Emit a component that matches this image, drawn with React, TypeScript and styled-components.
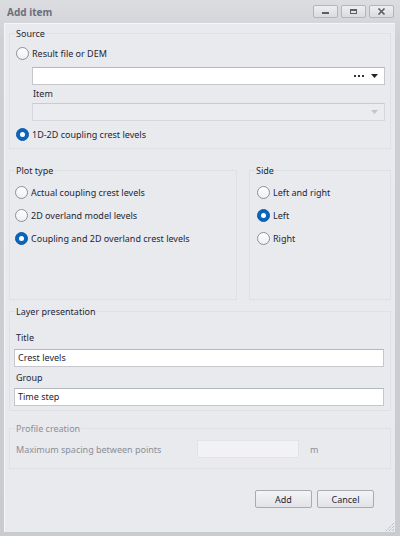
import styled, { createGlobalStyle } from "styled-components"

const GlobalStyle = createGlobalStyle`
  html, body {
    margin: 0;
    padding: 0;
    background: #c6c8cd;
  }
  body {
    font-family: "Noto Sans", "Liberation Sans", sans-serif;
    font-size: 9px;
    color: #1d2636;
  }
`

const Window = styled.div`
  width: 400px;
  height: 536px;
  box-sizing: border-box;
  display: flex;
  flex-direction: column;
  padding: 0 5px 4px 4px;
  background: linear-gradient(#dcdde1, #cfd0d5 40px, #c9cbd0);
`

const TitleBar = styled.div`
  height: 23px;
  flex: none;
  display: flex;
  align-items: center;
  margin-left: -4px;
  margin-right: -5px;
  padding: 0 6px 0 7px;
`

const Title = styled.div`
  flex: 1;
  font-size: 10px;
  font-weight: bold;
  color: #6c6f7b;
`

const CaptionButtons = styled.div`
  display: flex;
  gap: 3px;
`

const CaptionButton = styled.div`
  width: 25px;
  height: 13px;
  box-sizing: border-box;
  border: 1px solid #b3b5bc;
  border-radius: 2px;
  background: linear-gradient(#eeeff1, #dadbdf);
  display: flex;
  align-items: center;
  justify-content: center;
`

const Body = styled.div`
  flex: 1;
  position: relative;
  display: flex;
  flex-direction: column;
  padding: 3px 4px 0 5px;
  background: #e9eaee;
  box-shadow: inset 1px 1px 0 #f5f5f7;
`

const Group = styled.fieldset<{ $height?: number }>`
  margin: 0;
  padding: 0;
  min-width: 0;
  border: 1px solid #dfe0e4;
  ${(p) => (p.$height ? `height: ${p.$height}px; box-sizing: border-box;` : "")}
`

const Legend = styled.legend<{ $muted?: boolean }>`
  margin-left: 5px;
  padding: 0 1px;
  line-height: 15px;
  color: ${(p) => (p.$muted ? "#8b8e97" : "#1d2636")};
`

const GroupContent = styled.div<{ $pad: string }>`
  display: flex;
  flex-direction: column;
  padding: ${(p) => p.$pad};
`

const RadioRow = styled.label`
  display: flex;
  align-items: center;
  gap: 3px;
  height: 18px;
`

const RadioCircle = styled.span<{ $checked?: boolean }>`
  width: 13px;
  height: 13px;
  box-sizing: border-box;
  border-radius: 50%;
  flex: none;
  display: flex;
  align-items: center;
  justify-content: center;
  border: 1px solid ${(p) => (p.$checked ? "#0a5cae" : "#8d9099")};
  background: ${(p) => (p.$checked ? "#0c64bb" : "linear-gradient(#ffffff, #eeeff1)")};

  &::after {
    content: "";
    display: ${(p) => (p.$checked ? "block" : "none")};
    width: 5px;
    height: 5px;
    border-radius: 50%;
    background: #ffffff;
  }
`

const Combo = styled.div<{ $disabled?: boolean; $top: number }>`
  height: 18px;
  box-sizing: border-box;
  margin: ${(p) => p.$top}px 0 0 16px;
  display: flex;
  align-items: center;
  justify-content: flex-end;
  gap: 7px;
  padding-right: 6px;
  border: 1px solid ${(p) => (p.$disabled ? "#d6d7dc" : "#c5c7cd")};
  border-top-color: ${(p) => (p.$disabled ? "#c9cbd0" : "#b4b6bd")};
  background: ${(p) => (p.$disabled ? "#ebecef" : "#ffffff")};
`

const FieldLabel = styled.div<{ $indent?: number; $top?: number }>`
  height: 15px;
  line-height: 15px;
  margin-top: ${(p) => p.$top ?? 0}px;
  margin-left: ${(p) => p.$indent ?? 0}px;
`

const TextInput = styled.div<{ $top?: number }>`
  height: 18px;
  box-sizing: border-box;
  margin-top: ${(p) => p.$top ?? 0}px;
  padding-left: 3px;
  line-height: 16px;
  border: 1px solid #c5c7cd;
  border-top-color: #b4b6bd;
  background: #ffffff;
`

const SplitRow = styled.div`
  display: grid;
  grid-template-columns: 228px 1fr;
  gap: 12px;
  margin-top: 14px;
`

const RadioList = styled.div<{ $pad: string }>`
  display: flex;
  flex-direction: column;
  gap: 5px;
  padding: ${(p) => p.$pad};
`

const Spacer = styled.div<{ $h: number }>`
  height: ${(p) => p.$h}px;
  flex: none;
`

const SpacingRow = styled.div`
  display: flex;
  align-items: center;
  height: 18px;
  color: #8b8e97;
`

const SpacingLabel = styled.span`
  width: 181px;
`

const DisabledInput = styled.div`
  width: 102px;
  height: 18px;
  box-sizing: border-box;
  border: 1px solid #e2e3e7;
  background: #f2f2f4;
  margin-right: 11px;
`

const ButtonRow = styled.div`
  display: flex;
  justify-content: flex-end;
  gap: 5px;
  margin-top: 21px;
  padding-right: 17px;
`

const PushButton = styled.div`
  width: 57px;
  height: 18px;
  box-sizing: border-box;
  border: 1px solid #a9abb3;
  border-radius: 2px;
  background: linear-gradient(#f4f4f6, #e2e3e7);
  display: flex;
  align-items: center;
  justify-content: center;
`

const Grip = styled.svg`
  position: absolute;
  right: 0;
  bottom: 0;
`

function Radio({ label, checked }: { label: string; checked?: boolean }) {
  return (
    <RadioRow>
      <RadioCircle $checked={checked} />
      <span>{label}</span>
    </RadioRow>
  )
}

function ComboArrow({ color }: { color: string }) {
  return (
    <svg width="7" height="4" viewBox="0 0 7 4">
      <polygon points="0,0 7,0 3.5,4" fill={color} />
    </svg>
  )
}

export default function App() {
  return (
    <>
      <GlobalStyle />
      <Window>
        <TitleBar>
          <Title>Add item</Title>
          <CaptionButtons>
            <CaptionButton>
              <svg width="9" height="7" viewBox="0 0 9 7">
                <rect x="1" y="4" width="7" height="2" fill="#5b5e67" />
              </svg>
            </CaptionButton>
            <CaptionButton>
              <svg width="9" height="7" viewBox="0 0 9 7">
                <rect x="1.5" y="1.5" width="6" height="4" fill="none" stroke="#5b5e67" strokeWidth="1" />
                <rect x="1" y="1" width="7" height="2" fill="#5b5e67" />
              </svg>
            </CaptionButton>
            <CaptionButton>
              <svg width="9" height="7" viewBox="0 0 9 7">
                <path d="M1.5 0.5 L7.5 6.5 M7.5 0.5 L1.5 6.5" stroke="#5b5e67" strokeWidth="1.6" />
              </svg>
            </CaptionButton>
          </CaptionButtons>
        </TitleBar>

        <Body>
          <Group>
            <Legend>Source</Legend>
            <GroupContent $pad="3px 5px 5px 6px">
              <Radio label="Result file or DEM" />
              <Combo $top={5}>
                <svg width="10" height="3" viewBox="0 0 10 3">
                  <rect x="0" y="0" width="2" height="2" fill="#333" />
                  <rect x="4" y="0" width="2" height="2" fill="#333" />
                  <rect x="8" y="0" width="2" height="2" fill="#333" />
                </svg>
                <ComboArrow color="#222" />
              </Combo>
              <FieldLabel $indent={17} $top={1}>
                Item
              </FieldLabel>
              <Combo $disabled $top={2}>
                <ComboArrow color="#c3c5ca" />
              </Combo>
              <Spacer $h={4} />
              <Radio label="1D-2D coupling crest levels" checked />
            </GroupContent>
          </Group>

          <SplitRow>
            <Group $height={137}>
              <Legend>Plot type</Legend>
              <RadioList $pad="5px 4px 0 5px">
                <Radio label="Actual coupling crest levels" />
                <Radio label="2D overland model levels" />
                <Radio label="Coupling and 2D overland crest levels" checked />
              </RadioList>
            </Group>
            <Group $height={137}>
              <Legend>Side</Legend>
              <RadioList $pad="5px 4px 0 7px">
                <Radio label="Left and right" />
                <Radio label="Left" checked />
                <Radio label="Right" />
              </RadioList>
            </Group>
          </SplitRow>

          <Spacer $h={4} />
          <Group>
            <Legend>Layer presentation</Legend>
            <GroupContent $pad="11px 6px 4px 4px">
              <FieldLabel $indent={2}>Title</FieldLabel>
              <TextInput $top={4}>Crest levels</TextInput>
              <FieldLabel $indent={2} $top={3}>
                Group
              </FieldLabel>
              <TextInput $top={3}>Time step</TextInput>
            </GroupContent>
          </Group>

          <Spacer $h={10} />
          <Group>
            <Legend $muted>Profile creation</Legend>
            <GroupContent $pad="4px 6px 10px 6px">
              <SpacingRow>
                <SpacingLabel>Maximum spacing between points</SpacingLabel>
                <DisabledInput />
                <span>m</span>
              </SpacingRow>
            </GroupContent>
          </Group>

          <ButtonRow>
            <PushButton>Add</PushButton>
            <PushButton>Cancel</PushButton>
          </ButtonRow>

          <Grip width="12" height="12" viewBox="0 0 12 12">
            <path d="M11 3 L3 11 M11 6 L6 11 M11 9 L9 11" stroke="#a4a6ad" strokeWidth="1" strokeDasharray="1 1" />
          </Grip>
        </Body>
      </Window>
    </>
  )
}
